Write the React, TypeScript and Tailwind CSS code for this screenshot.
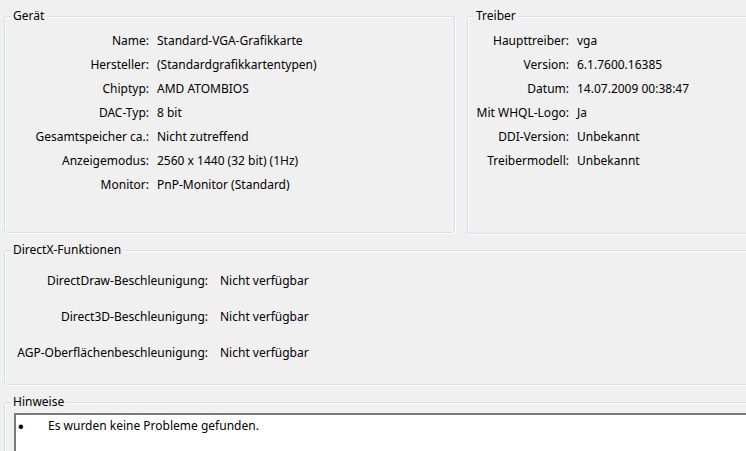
const FONT = "font-['Segoe_UI','Noto_Sans','Liberation_Sans',sans-serif]";

const BOX =
  "relative rounded-[3px] border border-[#d5dfe5] shadow-[inset_1px_1px_0_#fff,1px_1px_0_#fff]";

function Legend({ children }: { children: string }) {
  return (
    <span className="absolute left-[6px] top-[-9px] bg-[#f0f0f0] px-[2px] text-[12px] leading-[16px] text-black">
      {children}
    </span>
  );
}

const device: [string, string][] = [
  ["Name:", "Standard-VGA-Grafikkarte"],
  ["Hersteller:", "(Standardgrafikkartentypen)"],
  ["Chiptyp:", "AMD ATOMBIOS"],
  ["DAC-Typ:", "8 bit"],
  ["Gesamtspeicher ca.:", "Nicht zutreffend"],
  ["Anzeigemodus:", "2560 x 1440 (32 bit) (1Hz)"],
  ["Monitor:", "PnP-Monitor (Standard)"],
];

const driver: [string, string][] = [
  ["Haupttreiber:", "vga"],
  ["Version:", "6.1.7600.16385"],
  ["Datum:", "14.07.2009 00:38:47"],
  ["Mit WHQL-Logo:", "Ja"],
  ["DDI-Version:", "Unbekannt"],
  ["Treibermodell:", "Unbekannt"],
];

const features: [string, string][] = [
  ["DirectDraw-Beschleunigung:", "Nicht verfügbar"],
  ["Direct3D-Beschleunigung:", "Nicht verfügbar"],
  ["AGP-Oberflächenbeschleunigung:", "Nicht verfügbar"],
];

function Rows({ rows, labelW, gap, rowH }: { rows: [string, string][]; labelW: string; gap: string; rowH: string }) {
  return (
    <div className="flex flex-col">
      {rows.map(([k, v]) => (
        <div key={k} className={`flex items-center ${rowH}`}>
          <span className={`${labelW} shrink-0 text-right whitespace-nowrap`}>{k}</span>
          <span className={`${gap} whitespace-nowrap`}>{v}</span>
        </div>
      ))}
    </div>
  );
}

export default function App() {
  return (
    <div className={`w-[746px] h-[451px] overflow-hidden bg-[#f0f0f0] text-[12px] text-black ${FONT}`}>
      <div className="flex gap-[12px] pl-[4px] pt-[16px]">
        <div className={`${BOX} w-[451px] h-[217px] shrink-0 pt-[12px]`}>
          <Legend>Gerät</Legend>
          <Rows rows={device} labelW="w-[144px]" gap="ml-[8px]" rowH="h-[24px]" />
        </div>
        <div className={`${BOX} w-[300px] h-[218px] shrink-0 pt-[12px]`}>
          <Legend>Treiber</Legend>
          <Rows rows={driver} labelW="w-[101px]" gap="ml-[8px]" rowH="h-[24px]" />
        </div>
      </div>

      <div className={`${BOX} ml-[4px] mt-[16px] w-[760px] h-[135px] pt-[12px]`}>
        <Legend>DirectX-Funktionen</Legend>
        <Rows rows={features} labelW="w-[203px]" gap="ml-[12px]" rowH="h-[36px]" />
      </div>

      <div className={`${BOX} ml-[4px] mt-[17px] w-[760px] h-[80px] pt-[10px] pl-[9px]`}>
        <Legend>Hinweise</Legend>
        <div className="h-[60px] border-t-2 border-l-2 border-t-[#7a7a7a] border-l-[#7a7a7a] bg-white pt-[3px] flex items-start">
          <span className="w-[32px] pl-[2px] text-[15px] leading-[16px] font-bold">•</span>
          <span className="leading-[16px]">Es wurden keine Probleme gefunden.</span>
        </div>
      </div>
    </div>
  );
}
